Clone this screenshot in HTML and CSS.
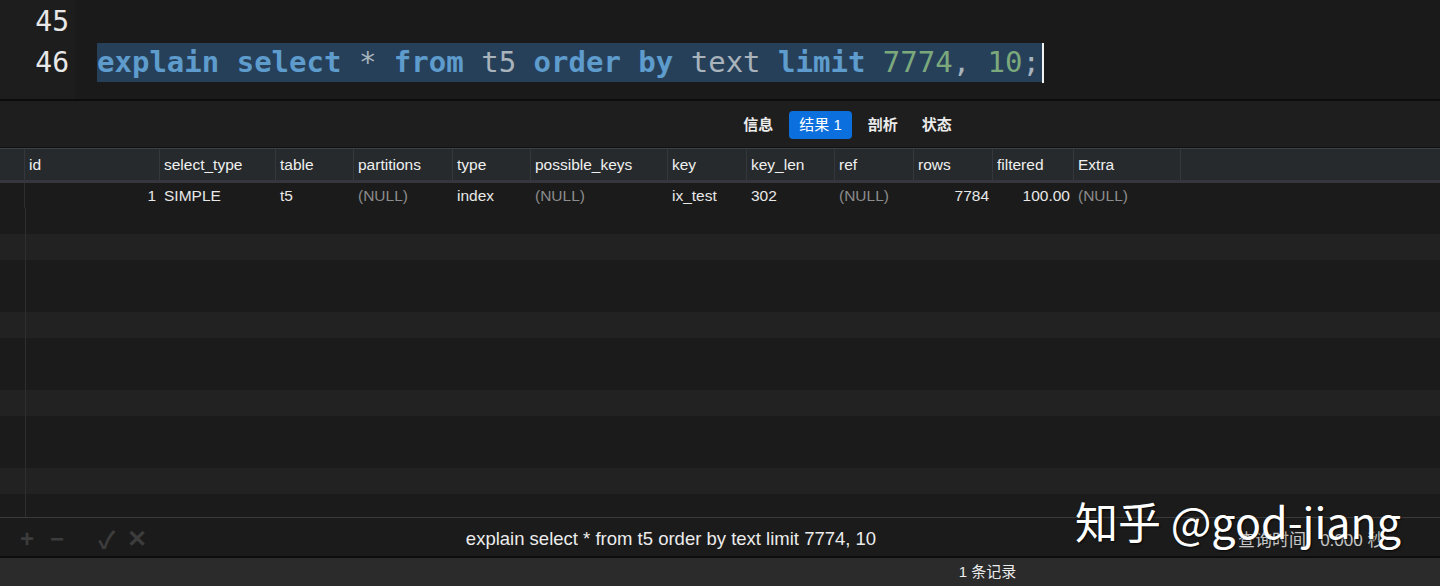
FILE: index.html
```html
<!DOCTYPE html>
<html lang="zh-CN">
<head>
<meta charset="utf-8">
<title>explain</title>
<link rel="stylesheet" href="styles.css">
</head>
<body>
<div class="app">
  <section class="editor">
    <div class="gutter">
      <div class="ln">45</div>
      <div class="ln">46</div>
    </div>
    <div class="code">
      <div class="line"></div>
      <div class="line"><span class="sel"><span class="kw">explain</span> <span class="kw">select</span> <span class="pl">*</span> <span class="kw">from</span> <span class="pl">t5</span> <span class="kw">order</span> <span class="kw">by</span> <span class="pl">text</span> <span class="kw">limit</span> <span class="num">7774</span><span class="pl">,</span> <span class="num">10</span><span class="pl">;</span></span><span class="caret"></span></div>
    </div>
  </section>

  <nav class="tabs">
    <span class="tab">信息</span>
    <span class="tab active">结果 1</span>
    <span class="tab">剖析</span>
    <span class="tab">状态</span>
  </nav>

  <section class="grid">
    <div class="row head">
      <div class="c c0"></div>
      <div class="c c1">id</div>
      <div class="c c2">select_type</div>
      <div class="c c3">table</div>
      <div class="c c4">partitions</div>
      <div class="c c5">type</div>
      <div class="c c6">possible_keys</div>
      <div class="c c7">key</div>
      <div class="c c8">key_len</div>
      <div class="c c9">ref</div>
      <div class="c c10">rows</div>
      <div class="c c11">filtered</div>
      <div class="c c12">Extra</div>
      <div class="c fill"></div>
    </div>
    <div class="body">
      <div class="row data">
        <div class="c c0"></div>
        <div class="c c1 r">1</div>
        <div class="c c2">SIMPLE</div>
        <div class="c c3">t5</div>
        <div class="c c4 null">(NULL)</div>
        <div class="c c5">index</div>
        <div class="c c6 null">(NULL)</div>
        <div class="c c7">ix_test</div>
        <div class="c c8">302</div>
        <div class="c c9 null">(NULL)</div>
        <div class="c c10 r">7784</div>
        <div class="c c11 r">100.00</div>
        <div class="c c12 null">(NULL)</div>
      </div>
      <div class="row empty"></div>
      <div class="row empty alt"></div>
      <div class="row empty"></div>
      <div class="row empty"></div>
      <div class="row empty alt"></div>
      <div class="row empty"></div>
      <div class="row empty"></div>
      <div class="row empty alt"></div>
      <div class="row empty"></div>
      <div class="row empty"></div>
      <div class="row empty alt"></div>
      <div class="row empty"></div>
    </div>
  </section>

  <footer class="bottombar">
    <div class="tools">
      <span class="tool">+</span>
      <span class="tool">−</span>
      <span class="tool gap">✓</span>
      <span class="tool">✕</span>
    </div>
    <div class="query">explain select * from t5 order by text limit 7774, 10</div>
    <div class="qtime">查询时间:&nbsp; 0.000 秒</div>
    <div class="watermark">知乎 @god-jiang</div>
  </footer>

  <div class="status">1 条记录</div>
</div>
</body>
</html>
```

FILE: styles.css
```css
* { box-sizing: border-box; }
html, body { margin: 0; padding: 0; }
body {
  background: #1b1b1b;
  font-family: "Liberation Sans", Arial, "Noto Sans CJK SC", sans-serif;
  color: #e6e6e6;
  width: 1440px;
  height: 586px;
  overflow: hidden;
}
.app { display: flex; flex-direction: column; height: 586px; }

/* editor */
.editor {
  height: 101px;
  flex: none;
  display: flex;
  background: #1a1a1a;
  border-bottom: 2px solid #0c0c0c;
}
.gutter {
  width: 75px;
  background: #1d1d1d;
  padding-top: 1px;
}
.ln {
  height: 41px;
  line-height: 41px;
  text-align: right;
  padding-right: 6px;
  font-family: "DejaVu Sans Mono", monospace;
  font-size: 28px;
  color: #e8e8e8;
}
.code {
  flex: 1;
  padding-top: 1px;
  padding-left: 22px;
  font-family: "DejaVu Sans Mono", monospace;
  font-size: 29px;
}
.line {
  height: 41px;
  line-height: 41px;
  display: flex;
  align-items: center;
  white-space: pre;
}
.sel {
  background: #27405a;
  height: 39px;
  line-height: 39px;
  padding-right: 2px;
  display: inline-block;
}
.kw { color: #5d9ccc; font-weight: bold; }
.pl { color: #a9b3bc; }
.num { color: #7ca97c; }
.caret {
  display: inline-block;
  width: 2px;
  height: 40px;
  background: #f2f2f2;
}

/* tabs */
.tabs {
  height: 47px;
  flex: none;
  background: #1e1e1e;
  display: flex;
  align-items: center;
  justify-content: center;
  gap: 8px;
  padding-left: 255px;
  padding-top: 2px;
  border-bottom: 1px solid #111;
}
.tab {
  font-size: 15px;
  color: #ececec;
  padding: 0 8px;
  height: 28px;
  line-height: 28px;
  border-radius: 4px;
  font-weight: bold;
}
.tab.active {
  background: #0b6fdd;
  color: #fff;
  padding: 0 10px;
  font-weight: normal;
}

/* grid */
.grid {
  flex: 1;
  min-height: 0;
  display: flex;
  flex-direction: column;
  background: #1b1b1b;
  overflow: hidden;
}
.row { display: flex; }
.head {
  height: 35px;
  flex: none;
  background: #262a2d;
  border-top: 1px solid #3c4146;
  border-bottom: 3px solid #37353d;
}
.c {
  flex: none;
  padding-left: 4px;
  font-size: 15.5px;
  white-space: nowrap;
  overflow: hidden;
}
.head .c {
  line-height: 31px;
  color: #f0f0f0;
  border-right: 1px solid #34383c;
  height: 31px;
}
.c0 { width: 25px; padding: 0; }
.c1 { width: 135px; }
.c2 { width: 116px; }
.c3 { width: 78px; }
.c4 { width: 99px; }
.c5 { width: 78px; }
.c6 { width: 137px; }
.c7 { width: 79px; }
.c8 { width: 88px; }
.c9 { width: 79px; }
.c10 { width: 79px; }
.c11 { width: 81px; }
.c12 { width: 107px; }
.head .fill { flex: 1; border-right: 0; }

.body { flex: 1; min-height: 0; display: flex; flex-direction: column; overflow: hidden; }
.body .row { height: 26px; flex: none; }
.body .row::before {
  content: "";
  width: 25px;
  border-right: 1px solid #2e2e2e;
  flex: none;
}
.body .data { height: 25px; }
.data::before { display: none; }
.data .c0 { border-right: 1px solid #2e2e2e; }
.data .c { line-height: 26px; color: #e8e8e8; }
.data .c.r { text-align: right; padding-right: 4px; }
.data .c.null { color: #8c8c8c; }
.alt { background: #222222; }

/* bottom */
.bottombar {
  position: relative;
  height: 41px;
  flex: none;
  background: #1b1b1b;
  border-top: 1px solid #3a3a3a;
  border-bottom: 2px solid #0d0d0d;
  display: flex;
  align-items: center;
  padding-top: 3px;
}
.tools {
  width: 160px;
  display: flex;
  align-items: center;
  padding-left: 20px;
  gap: 16px;
  color: #3c3c3c;
  font-size: 24px;
  font-weight: bold;
}
.tool.gap { margin-left: 18px; }
.tool.gap + .tool { margin-left: -4px; }
.query {
  flex: 1;
  text-align: center;
  font-size: 18.5px;
  color: #ececec;
  padding-right: 38px;
}
.qtime {
  width: 220px;
  font-size: 17px;
  color: #c8c8c8;
  padding-left: 18px;
}
.watermark {
  position: absolute;
  left: 1075px;
  top: -29px;
  font-size: 43px;
  color: #ffffff;
  font-family: "Noto Sans CJK SC", sans-serif;
  text-shadow: 1px 1px 2px rgba(0,0,0,0.8);
  white-space: nowrap;
}
.status {
  height: 28px;
  flex: none;
  background: #2b2b2b;
  font-size: 15px;
  color: #ececec;
  text-align: center;
  padding-left: 535px;
  line-height: 28px;
}
```
